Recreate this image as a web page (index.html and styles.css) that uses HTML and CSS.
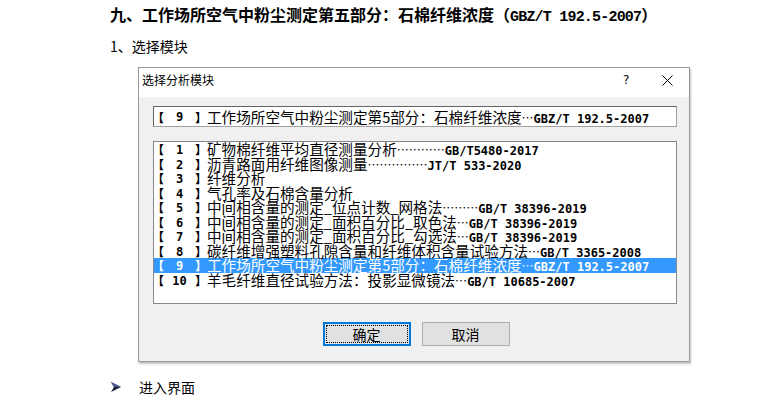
FILE: index.html
```html
<!DOCTYPE html>
<html lang="zh-CN">
<head>
    <meta charset="UTF-8">
    <title>石棉纤维浓度</title>
    <link rel="stylesheet" href="styles.css">
</head>
<body>
    <div class="doc">
        <h1>九、工作场所空气中粉尘测定第五部分：石棉纤维浓度（<span class="latin">GBZ/T 192.5-2007</span>）</h1>
        <p class="step">1、选择模块</p>

        <div class="dialog">
            <div class="titlebar">
                <span class="title">选择分析模块</span>
                <span class="help">?</span>
                <svg class="close" width="11" height="11" viewBox="0 0 11 11">
                    <path d="M0.5 0.5 L10.5 10.5 M10.5 0.5 L0.5 10.5" stroke="#000" stroke-width="1" fill="none"/>
                </svg>
            </div>
            <div class="dialog-body">
                <div class="combo">
                    <span class="no"><b>【</b><i>9</i><b>】</b></span>工作场所空气中粉尘测定第5部分：石棉纤维浓度<span class="code"><span class="dots">…</span>GBZ/T 192.5-2007</span>
                </div>

                <div class="list">
                    <div class="row"><span class="no"><b>【</b><i>1</i><b>】</b></span>矿物棉纤维平均直径测量分析<span class="code"><span class="dots">…………</span>GB/T5480-2017</span></div>
                    <div class="row"><span class="no"><b>【</b><i>2</i><b>】</b></span>沥青路面用纤维图像测量<span class="code"><span class="dots">……………</span>JT/T 533-2020</span></div>
                    <div class="row"><span class="no"><b>【</b><i>3</i><b>】</b></span>纤维分析</div>
                    <div class="row"><span class="no"><b>【</b><i>4</i><b>】</b></span>气孔率及石棉含量分析</div>
                    <div class="row"><span class="no"><b>【</b><i>5</i><b>】</b></span>中间相含量的测定_位点计数_网格法<span class="code"><span class="dots">………</span>GB/T 38396-2019</span></div>
                    <div class="row"><span class="no"><b>【</b><i>6</i><b>】</b></span>中间相含量的测定_面积百分比_取色法<span class="code"><span class="dots">…</span>GB/T 38396-2019</span></div>
                    <div class="row"><span class="no"><b>【</b><i>7</i><b>】</b></span>中间相含量的测定_面积百分比_勾选法<span class="code"><span class="dots">…</span>GB/T 38396-2019</span></div>
                    <div class="row"><span class="no"><b>【</b><i>8</i><b>】</b></span>碳纤维增强塑料孔隙含量和纤维体积含量试验方法<span class="code"><span class="dots">…</span>GB/T 3365-2008</span></div>
                    <div class="row selected"><span class="no"><b>【</b><i>9</i><b>】</b></span>工作场所空气中粉尘测定第5部分：石棉纤维浓度<span class="code"><span class="dots">…</span>GBZ/T 192.5-2007</span></div>
                    <div class="row"><span class="no"><b>【</b><i>10</i><b>】</b></span>羊毛纤维直径试验方法：投影显微镜法<span class="code"><span class="dots">…</span>GB/T 10685-2007</span></div>
                </div>

                <div class="buttons">
                    <button class="btn default"><span>确定</span></button>
                    <button class="btn">取消</button>
                </div>
            </div>
        </div>

        <p class="bullet">
            <svg class="arrow" width="10" height="10" viewBox="0 0 10 10">
                <polygon points="0,0 10,5 0,10 3,5" fill="#1a1a2e"/>
                <polygon points="0,0 10,5 3,5" fill="#4a5a9a"/>
            </svg>
            进入界面
        </p>
    </div>
</body>
</html>
```

FILE: styles.css
```css
body {
    margin: 0;
    background: #fff;
    color: #000;
    font-family: "Noto Sans CJK SC", sans-serif;
}
.doc {
    padding: 4px 0 0 110px;
}
h1 {
    margin: 0;
    font-size: 16px;
    line-height: 20px;
    font-weight: bold;
}
h1 .latin {
    font-family: "Liberation Mono", monospace;
    font-size: 15px;
    letter-spacing: -0.8px;
}
.step {
    margin: 8px 0 0;
    font-size: 14px;
    line-height: 20px;
}

/* ventana de dialogo */
.dialog {
    margin: 11px 0 0 28px;
    width: 550px;
    height: 293px;
    border: 1px solid #9a9a9a;
    background: #f0f0f0;
    box-shadow: 1px 2px 2px rgba(0, 0, 0, 0.25);
}
.titlebar {
    display: flex;
    align-items: flex-start;
    height: 29px;
    padding-top: 4px;
    box-sizing: border-box;
    background: #fff;
    font-size: 12px;
    line-height: 16px;
}
.title {
    flex: 1;
    padding-left: 3px;
}
.help {
    width: 39px;
    font-family: "DejaVu Sans", sans-serif;
    font-size: 12px;
}
.close {
    margin: 3px 16px 0 0;
}
.dialog-body {
    padding: 9px 12px 0 14px;
}
.combo {
    height: 19px;
    line-height: 19px;
    background: #fff;
    border: 1px solid #a0a0a0;
    border-top-color: #646464;
    border-left-color: #646464;
    font-size: 14.6px;
    white-space: nowrap;
    overflow: hidden;
}
.list {
    margin-top: 14px;
    height: 161px;
    background: #fff;
    border: 1px solid #828790;
    overflow: hidden;
}
.row {
    height: 14.5px;
    line-height: 14.5px;
    font-size: 14.6px;
    white-space: nowrap;
}
.row.selected {
    background: #3399ff;
    color: #fff;
}
.no {
    display: inline-flex;
    justify-content: space-between;
    width: 55px;
    margin-left: -2px;
    font-size: 12px;
    font-weight: bold;
}
.no b {
    font-weight: bold;
}
.no i {
    font-style: normal;
    font-family: "DejaVu Sans Mono", monospace;
}
.code {
    font-family: "DejaVu Sans Mono", monospace;
    font-weight: bold;
    font-size: 12px;
}
.dots {
    font-family: "Noto Sans CJK SC", sans-serif;
    font-weight: normal;
}
.buttons {
    display: flex;
    justify-content: center;
    gap: 11px;
    margin-top: 18px;
    padding-left: 2px;
}
.btn {
    width: 88px;
    height: 24px;
    padding: 0;
    background: #e1e1e1;
    border: 1px solid #adadad;
    font-family: "Noto Sans CJK SC", sans-serif;
    font-size: 14px;
    color: #000;
}
.btn.default {
    border: 2px solid #0078d7;
    padding: 1px;
}
.btn.default span {
    display: block;
    height: 16px;
    line-height: 16px;
    border: 1px dotted #000;
}
.bullet {
    display: flex;
    align-items: center;
    margin: 15px 0 0;
    font-size: 14px;
    line-height: 20px;
}
.arrow {
    margin: 0 18px 0 1px;
}
```
